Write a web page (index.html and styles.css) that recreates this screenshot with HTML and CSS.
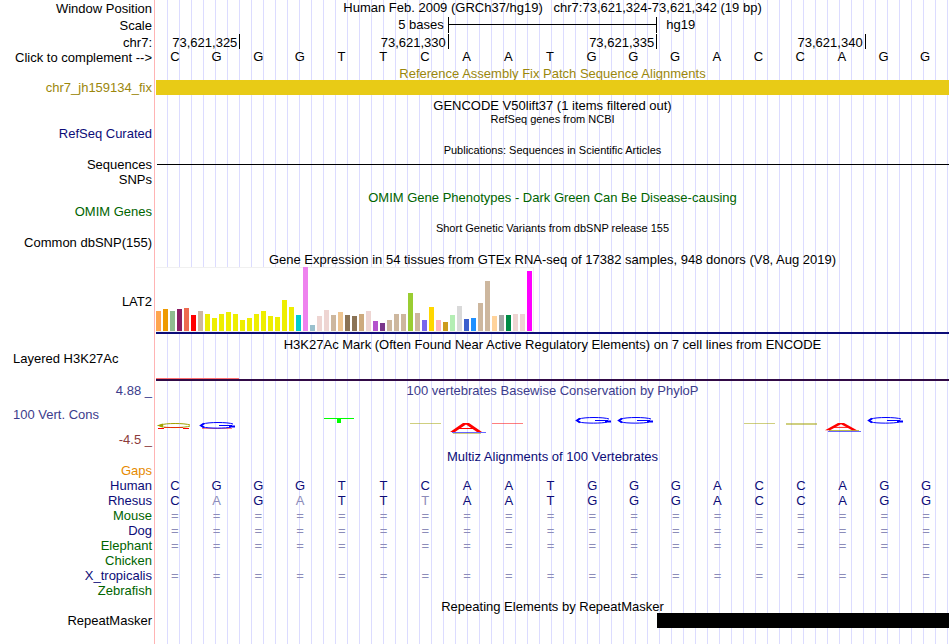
FILE: index.html
```html
<!DOCTYPE html>
<html lang="en">

<head>
    <meta charset="UTF-8">
    <meta name="viewport" content="width=device-width, initial-scale=1.0">
    <title>Human chr7:73,621,324-73,621,342</title>
    <link rel="stylesheet" href="styles.css">
</head>

<body>

    <main class="browser">

        <!-- ruler -->
        <section class="ruler">
            <div class="row position">
                <div class="label">Window Position</div>
                <div class="heading">Human Feb. 2009 (GRCh37/hg19) &nbsp; chr7:73,621,324-73,621,342 (19 bp)</div>
            </div>
            <div class="row scale">
                <div class="label">Scale</div>
                <div class="columns">
                    <span class="scale-size">5 bases</span>
                    <span class="scale-bar"></span>
                    <span class="scale-db">hg19</span>
                </div>
            </div>
            <div class="row ticks">
                <div class="label">chr7:</div>
                <div class="columns">
                    <span class="tick first">73,621,325</span>
                    <span class="tick">73,621,330</span>
                    <span class="tick">73,621,335</span>
                    <span class="tick">73,621,340</span>
                </div>
            </div>
            <div class="row sequence">
                <button type="button" class="label">Click to complement --&gt;</button>
                <div class="columns bases" data-seq="CGGGTTCAATGGGACCAGG"></div>
            </div>
        </section>

        <section class="track gold">
            <h2 class="title">Reference Assembly Fix Patch Sequence Alignments</h2>
            <div class="row">
                <div class="label">chr7_jh159134_fix</div>
                <div class="patch"></div>
            </div>
        </section>

        <section class="track">
            <h2 class="title">GENCODE V50lift37 (1 items filtered out)</h2>
            <h2 class="title small">RefSeq genes from NCBI</h2>
            <div class="row">
                <div class="label navy">RefSeq Curated</div>
            </div>
        </section>

        <section class="track tight">
            <h2 class="title small">Publications: Sequences in Scientific Articles</h2>
            <div class="row">
                <div class="label">Sequences</div>
                <div class="thin-line"></div>
            </div>
            <div class="row">
                <div class="label">SNPs</div>
            </div>
        </section>

        <section class="track green">
            <h2 class="title">OMIM Gene Phenotypes - Dark Green Can Be Disease-causing</h2>
            <div class="row">
                <div class="label">OMIM Genes</div>
            </div>
        </section>

        <section class="track tight">
            <h2 class="title small">Short Genetic Variants from dbSNP release 155</h2>
            <div class="row">
                <div class="label">Common dbSNP(155)</div>
            </div>
        </section>

        <section class="track tight">
            <h2 class="title">Gene Expression in 54 tissues from GTEx RNA-seq of 17382 samples, 948 donors (V8, Aug 2019)</h2>
            <div class="row gtex">
                <div class="label">LAT2</div>
                <div class="gene">
                    <div class="chart" id="gtexChart"></div>
                </div>
            </div>
        </section>

        <section class="track">
            <h2 class="title">H3K27Ac Mark (Often Found Near Active Regulatory Elements) on 7 cell lines from ENCODE</h2>
            <div class="row histone">
                <div class="label left">Layered H3K27Ac</div>
                <div class="signal">
                    <div class="columns"><span class="peak"></span></div>
                </div>
            </div>
        </section>

        <section class="track tight slate">
            <div class="row">
                <div class="label limit">4.88 _</div>
                <h2 class="heading">100 vertebrates Basewise Conservation by PhyloP</h2>
            </div>
            <div class="row phylop">
                <div class="label stack">
                    <span class="name">100 Vert. Cons</span>
                    <span class="limit low">-4.5 _</span>
                </div>
                <svg class="logo" viewBox="0 0 793 50" preserveAspectRatio="none" aria-hidden="true">
                    <defs>
                        <g id="mark-g" fill="none" stroke="#0000ff">
                            <path d="M33 2C28 0 8 0 3 2Q-1 3.500 3 5C8 6.500 27 6.500 31 5"/>
                            <path d="M4 1.500L1 3.500L4 5.500" stroke-width="2"/>
                            <path d="M19 3.500H32"/>
                            <path d="M29 4.500H35" stroke-width="2"/>
                        </g>
                        <g id="mark-a">
                            <path d="M0 9L13 0H19L32 9H27L16 1.500L5 9Z" fill="#ff0000"/>
                            <path d="M9 5.500H23" fill="none" stroke="#ff0000"/>
                        </g>
                    </defs>
                    <g fill="none" stroke="#a0a000">
                        <path d="M34 28C29 26 9 26 5 28Q2 28.500 5 29.500C9 31 29 31 34 29"/>
                        <path d="M7 27.500L4 28.500L7 29.500" stroke-width="2"/>
                        <path d="M254 26.500H285" opacity=".5"/>
                        <path d="M588 26.500H619" opacity=".5"/>
                        <path d="M630 27H661" stroke-width="2" opacity=".5"/>
                        <path d="M297 36.500H325" opacity=".5"/>
                        <path d="M673 33.500H703" opacity=".7"/>
                    </g>
                    <g fill="none" stroke="#ff0000">
                        <path d="M2 31.500H8M27 31.500H33"/>
                        <path d="M8 30.500H27" opacity=".7"/>
                        <path d="M46 31.500H76" opacity=".5"/>
                        <path d="M336 26.500H367" opacity=".5"/>
                    </g>
                    <g fill="#00ff00">
                        <rect x="168" y="21" width="30" height="1"/>
                        <rect x="181" y="21" width="4" height="5"/>
                    </g>
                    <g fill="none" stroke="#0000ff">
                        <path d="M296 35.500H330" opacity=".6"/>
                        <path d="M672 34.500H705" opacity=".6"/>
                    </g>
                    <use href="#mark-g" x="44" y="25"/>
                    <use href="#mark-g" x="420" y="20"/>
                    <use href="#mark-g" x="462" y="20"/>
                    <use href="#mark-g" x="712" y="20"/>
                    <use href="#mark-a" transform="translate(294 26)"/>
                    <use href="#mark-a" transform="translate(669 26) scale(1 .8)"/>
                </svg>
            </div>
        </section>

        <section class="track tight">
            <h2 class="title navy">Multiz Alignments of 100 Vertebrates</h2>
            <table class="multiz">
                <tbody id="multizRows"></tbody>
            </table>
        </section>

        <section class="track flush">
            <h2 class="title">Repeating Elements by RepeatMasker</h2>
            <div class="row">
                <div class="label">RepeatMasker</div>
                <div class="columns"><span class="repeat"></span></div>
            </div>
        </section>

    </main>

    <script type="text/javascript">
        // GTEx bars: [height, color]
        const tissues = [
            [20, '#ffa54f'], [22, '#ee9a00'], [20, '#8fbc8f'], [22, '#8b1c62'], [23, '#ee6a50'], [16, '#ff0000'],
            [20, '#cdb79e'], [17, '#eeee00'], [13, '#eeee00'], [17, '#eeee00'], [19, '#eeee00'], [17, '#eeee00'],
            [11, '#eeee00'], [13, '#eeee00'], [17, '#eeee00'], [20, '#eeee00'], [15, '#eeee00'], [14, '#eeee00'],
            [31, '#eeee00'], [24, '#eeee00'], [16, '#00cdcd'], [64, '#ee82ee'], [6, '#9ac0cd'], [15, '#eed5d2'],
            [21, '#eed5d2'], [16, '#cdb79e'], [19, '#eec591'], [16, '#8b7355'], [15, '#8b7355'], [17, '#cdaa7d'],
            [20, '#eed5d2'], [10, '#b452cd'], [8, '#7a378b'], [11, '#cdb79e'], [17, '#cdb79e'], [17, '#cdb79e'],
            [38, '#9acd32'], [18, '#cdb79e'], [11, '#7a67ee'], [24, '#ffd700'], [11, '#ffb6c1'], [9, '#cd9b1d'],
            [16, '#b4eeb4'], [25, '#d9d9d9'], [12, '#3a5fcd'], [13, '#1e90ff'], [28, '#cdb79e'], [50, '#cdb79e'],
            [15, '#ffd39b'], [16, '#a6a6a6'], [16, '#008b45'], [17, '#eed5d2'], [17, '#eed5d2'], [60, '#ff00ff']
        ];

        // lower case letters differ from human and are drawn lighter
        const species = [
            ['Gaps', 'orange', ''],
            ['Human', 'navy', 'CGGGTTCAATGGGACCAGG'],
            ['Rhesus', 'navy', 'CaGaTTtAATGGGACCAGG'],
            ['Mouse', 'green', '==================='],
            ['Dog', 'navy', '==================='],
            ['Elephant', 'green', '==================='],
            ['Chicken', 'green', ''],
            ['X_tropicalis', 'navy', '==================='],
            ['Zebrafish', 'green', '']
        ];

        document.getElementById('gtexChart').innerHTML = tissues.map(([height, color]) =>
            `<span class="bar" style="height: ${height}px; background-color: ${color}"></span>`
        ).join('');

        document.querySelectorAll('.bases').forEach((el) => {
            el.innerHTML = [...el.dataset.seq].map((base) => `<span>${base}</span>`).join('');
        });

        document.getElementById('multizRows').innerHTML = species.map(([name, color, seq]) => {
            const cells = [...seq].map((base) => {
                const light = base === base.toLowerCase();
                return `<td class="${light ? 'light' : ''}">${base.toUpperCase()}</td>`;
            }).join('');
            return `<tr><th scope="row" class="${color}">${name}</th>${cells}</tr>`;
        }).join('');
    </script>
</body>

</html>
```
FILE: styles.css
```css
body {
    margin: 0;
    background-color: white;
    color: black;
    font-family: "Liberation Sans", Arial, Helvetica, sans-serif;
    font-size: 13px;
    line-height: 15px;
}

/* label column, red divider, then a guide line every 12px */
.browser {
    min-height: 100vh;
    margin-right: 1px;
    background-image:
        linear-gradient(to right, white 154px, #ffb4b4 154px, #ffb4b4 155px, white 155px, white 156px, transparent 156px),
        linear-gradient(to right, #dcdcff 1px, transparent 1px);
    background-size: 100% 100%, 12px 100%;
    background-position: 0 0, 11px 0;
}

.row {
    display: grid;
    grid-template-columns: 156px 1fr;
    min-height: 15px;
}

.label {
    padding: 0 4px 0 0;
    text-align: right;
    white-space: nowrap;
}

.label.left {
    padding-left: 13px;
    text-align: left;
}

button.label {
    border: none;
    background: none;
    color: inherit;
    font: inherit;
    cursor: pointer;
}

.heading {
    margin: 0;
    font-size: 13px;
    font-weight: normal;
    text-align: center;
}

.columns {
    display: grid;
    grid-template-columns: repeat(19, minmax(0, 1fr));
}

/* ruler */
.ruler .columns {
    margin-right: 1px;
}

.position,
.scale {
    height: 17px;
}

.position .label,
.scale .label,
.ticks .label {
    padding-top: 1px;
}

.scale-size {
    grid-column: 1 / span 7;
    padding-right: 4px;
    text-align: right;
}

.scale-bar {
    grid-column: 8 / span 5;
    height: 16px;
    margin-right: -1px;
    border: solid black;
    border-width: 0 1px;
    box-sizing: border-box;
    background: linear-gradient(black, black) 0 7px / 100% 1px no-repeat;
}

.scale-db {
    grid-column: 13 / span 2;
    padding-left: 10px;
}

.ticks {
    height: 16px;
}

.tick {
    grid-column: span 5;
    height: 15px;
    margin-right: -1px;
    padding-right: 2px;
    border-right: 1px solid black;
    line-height: 17px;
    text-align: right;
}

.tick.first {
    grid-column: span 2;
}

.sequence {
    height: 13px;
    min-height: 0;
}

.bases span {
    padding-right: 4px;
    line-height: 13px;
    text-align: center;
}

/* tracks */
.track {
    padding-top: 3px;
}

.track.tight {
    padding-top: 2px;
}

.track.flush {
    padding-top: 1px;
}

.title {
    height: 14px;
    margin: 0 0 0 156px;
    font-size: 13px;
    font-weight: normal;
    line-height: 16px;
    text-align: center;
    white-space: nowrap;
}

.title.small {
    font-size: 11px;
    line-height: 14px;
}

.gold {
    color: #9b870c;
}

.navy {
    color: #0c0c78;
}

.green {
    color: #006400;
}

.slate {
    color: #3c3c8c;
}

.orange {
    color: #e68a00;
}

.patch {
    background-color: #e8cb16;
}

.thin-line {
    height: 1px;
    margin: 7px 0 0 1px;
    background-color: black;
}

.gtex {
    height: 68px;
}

.gtex .label {
    align-self: center;
    padding-top: 2px;
}

.gene {
    display: flex;
    align-items: flex-end;
    border-bottom: 2px solid #0c0c78;
}

.chart {
    display: flex;
    align-items: flex-end;
    gap: 2px;
    height: 64px;
    padding-right: 1px;
    border: solid #f0f0f0;
    border-width: 0 1px 1px 0;
    background: linear-gradient(#f0f0f0, #f0f0f0) 0 0 / 100% 1px no-repeat white;
}

.bar {
    width: 5px;
}

.histone {
    height: 30px;
}

.signal {
    align-self: end;
    border-bottom: 2px solid #320a46;
}

.peak {
    grid-column: span 2;
    height: 1px;
    background-color: #ff6e6e;
}

.phylop {
    height: 50px;
}

.stack {
    display: flex;
    flex-direction: column;
    justify-content: space-between;
    padding-top: 10px;
}

.name {
    padding-left: 13px;
    text-align: left;
}

.low {
    color: #8c3c3c;
}

.slate .row:first-child {
    height: 14px;
    min-height: 0;
}

.logo {
    width: 100%;
    height: 50px;
}

.multiz {
    display: block;
}

.multiz tbody {
    display: block;
}

.multiz tr {
    display: grid;
    grid-template-columns: 156px repeat(19, minmax(0, 1fr));
    height: 15px;
}

.multiz th {
    padding: 0 4px 0 0;
    font-weight: normal;
    text-align: right;
}

.multiz td {
    padding: 0 4px 0 0;
    color: #0c0c78;
    text-align: center;
}

.multiz td.light {
    color: #8c8cb9;
}

.repeat {
    grid-column: 13 / -1;
    background-color: black;
}
```
